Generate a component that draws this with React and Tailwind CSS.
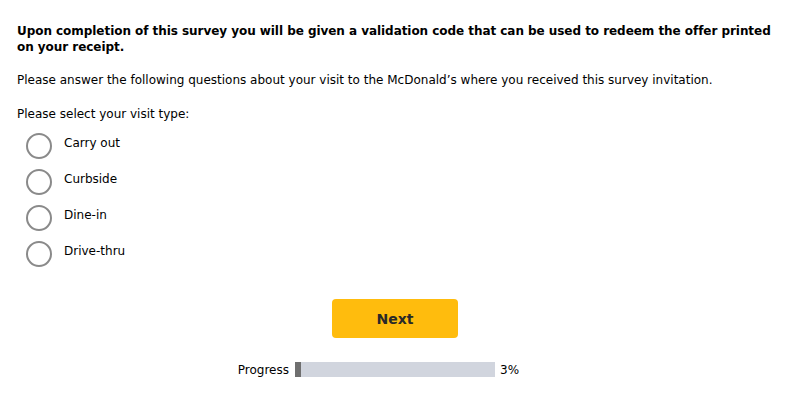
import React, { useState } from 'react';

const options = ['Carry out', 'Curbside', 'Dine-in', 'Drive-thru'];

const App = () => {
    const [selected, setSelected] = useState(null);
    const progress = 3;

    return (
        <div className="w-[790px] h-[408px] bg-white text-black text-[12px] leading-[16px] font-['DejaVu_Sans',Verdana,sans-serif]">
            <div className="px-[17px] pt-[23px]">
                <p className="font-bold tracking-[-0.05px] -mr-[12px]">
                    Upon completion of this survey you will be given a validation code that can be used to redeem the offer printed on your receipt.
                </p>
                <p className="mt-[17px]">
                    Please answer the following questions about your visit to the McDonald’s where you received this survey invitation.
                </p>
                <p className="mt-[18px]">Please select your visit type:</p>

                <div className="mt-[11px] pl-[9px] flex flex-col gap-[10px]">
                    {options.map((opt) => (
                        <label key={opt} className="flex items-center gap-[12px] cursor-pointer" onClick={() => setSelected(opt)}>
                            <span className="w-[26px] h-[26px] rounded-full border-2 border-[#8a8a8a] flex items-center justify-center">
                                {selected === opt && <span className="w-[14px] h-[14px] rounded-full bg-[#292929]" />}
                            </span>
                            <span className="-mt-[6px]">{opt}</span>
                        </label>
                    ))}
                </div>
            </div>

            <div className="flex justify-center mt-[32px]">
                <button className="w-[126px] h-[39px] rounded-[4px] bg-[#ffbc0d] text-[#292929] font-bold text-[14px]">
                    Next
                </button>
            </div>

            <div className="flex justify-center mt-[24px]">
                <div className="relative w-[200px] h-[15px] bg-[#d1d5de] flex">
                    <div className="bg-[#6f6f6f]" style={{ width: `${progress * 2}px` }} />
                    <span className="absolute right-full mr-[6px] top-0">Progress</span>
                    <span className="absolute left-full ml-[5px] top-0">{progress}%</span>
                </div>
            </div>
        </div>
    );
};

export default App;
